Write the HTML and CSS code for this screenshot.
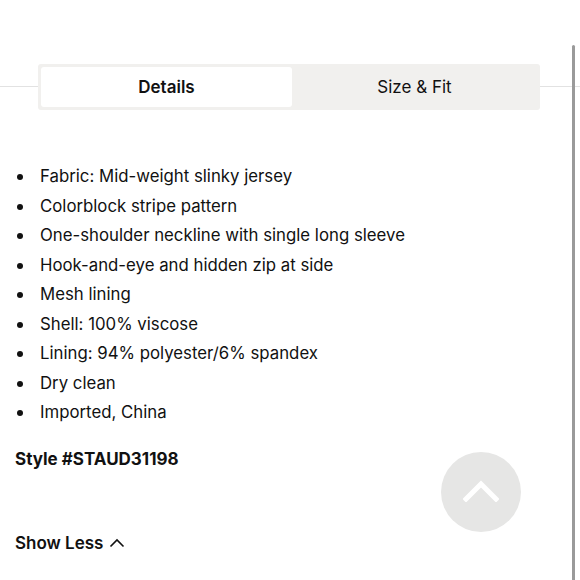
FILE: index.html
```html
<!DOCTYPE html>
<html>
<head>
<meta charset="utf-8">
<link rel="stylesheet" href="styles.css">
</head>
<body>
<div class="page">
  <div class="tabs-row">
    <div class="tabs">
      <div class="tab active">Details</div>
      <div class="tab">Size &amp; Fit</div>
    </div>
  </div>
  <ul class="list">
    <li>Fabric: Mid-weight slinky jersey</li>
    <li>Colorblock stripe pattern</li>
    <li>One-shoulder neckline with single long sleeve</li>
    <li>Hook-and-eye and hidden zip at side</li>
    <li>Mesh lining</li>
    <li>Shell: 100% viscose</li>
    <li>Lining: 94% polyester/6% spandex</li>
    <li>Dry clean</li>
    <li>Imported, China</li>
  </ul>
  <div class="style">Style #STAUD31198</div>
  <div class="show-less">Show Less
    <svg class="chev" width="16" height="10" viewBox="0 0 16 10"><path d="M1.5 8.5 L8 2 L14.5 8.5" fill="none" stroke="#111" stroke-width="1.6"/></svg>
  </div>
</div>
<div class="top-btn">
  <svg width="36" height="22" viewBox="0 0 36 22"><path d="M3 19 L18 4 L33 19" fill="none" stroke="#fff" stroke-width="5" stroke-linecap="square"/></svg>
</div>
<div class="scrollbar"></div>
</body>
</html>
```
FILE: styles.css
```css
html, body {
  margin: 0;
  padding: 0;
  background: #fff;
}
body {
  font-family: Inter, "Liberation Sans", Arial, sans-serif;
  color: #111;
  width: 580px;
  height: 580px;
  overflow: hidden;
  position: relative;
}
.page {
  padding-top: 64px;
}
.tabs-row {
  position: relative;
  display: flex;
  justify-content: flex-start;
  padding-left: 38px;
}
.tabs-row::before {
  content: "";
  position: absolute;
  left: 0;
  right: 0;
  top: 22px;
  height: 1px;
  background: #e2e2e2;
}
.tabs {
  position: relative;
  display: flex;
  width: 496px;
  height: 40px;
  padding: 3px;
  background: #f1f0ee;
  border-radius: 3px;
}
.tab {
  flex: 1;
  display: flex;
  align-items: center;
  justify-content: center;
  font-size: 17px;
  color: #111;
}
.tab.active {
  background: #fff;
  border-radius: 3px;
  font-weight: 600;
  flex: 0 0 251px;
}
.list {
  list-style: none;
  margin: 52px 0 0 0;
  padding: 0 0 0 40px;
  font-size: 16.8px;
  line-height: 29.5px;
}
.list li {
  position: relative;
}
.list li::before {
  content: "";
  position: absolute;
  left: -23px;
  top: 12px;
  width: 6px;
  height: 6px;
  border-radius: 50%;
  background: #111;
}
.style {
  margin: 21px 0 0 15px;
  font-weight: 700;
  font-size: 17px;
}
.show-less {
  margin: 64px 0 0 15px;
  font-weight: 600;
  font-size: 17px;
  display: flex;
  align-items: center;
  gap: 6px;
}
.chev {
  display: block;
}
.top-btn {
  position: absolute;
  left: 441px;
  top: 452px;
  width: 80px;
  height: 80px;
  border-radius: 50%;
  background: #e6e6e5;
  display: flex;
  align-items: center;
  justify-content: center;
}
.top-btn svg {
  margin-top: -2px;
}
.scrollbar {
  position: absolute;
  left: 572px;
  top: 45px;
  width: 3px;
  height: 540px;
  background: #9a9a9a;
  border-radius: 2px;
}
```
